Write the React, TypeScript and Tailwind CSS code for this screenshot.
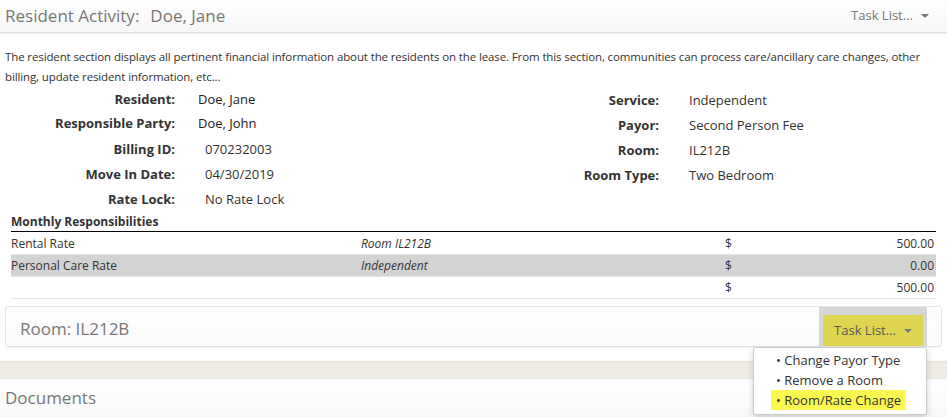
import React from 'react';

const font = { fontFamily: '"Open Sans", "Noto Sans", sans-serif' };

const Caret = () => (
  <span className="ml-[8px] inline-block h-0 w-0 border-x-[4px] border-t-[4px] border-x-transparent border-t-[#777] align-middle" />
);

const leftRows = [
  { label: 'Resident:', value: 'Doe, Jane', shift: false, h: 'h-[23px]' },
  { label: 'Responsible Party:', value: 'Doe, John', shift: false, h: 'h-[26px]' },
  { label: 'Billing ID:', value: '070232003', shift: true, h: 'h-[25px]' },
  { label: 'Move In Date:', value: '04/30/2019', shift: true, h: 'h-[25px]' },
  { label: 'Rate Lock:', value: 'No Rate Lock', shift: true, h: 'h-[25px]' },
];

const rightRows = [
  { label: 'Service:', value: 'Independent' },
  { label: 'Payor:', value: 'Second Person Fee' },
  { label: 'Room:', value: 'IL212B' },
  { label: 'Room Type:', value: 'Two Bedroom' },
];

const charges = [
  { name: 'Rental Rate', type: 'Room IL212B', amount: '500.00', shaded: false, h: 'h-[23px]' },
  { name: 'Personal Care Rate', type: 'Independent', amount: '0.00', shaded: true, h: 'h-[22px]' },
  { name: '', type: '', amount: '500.00', shaded: false, h: 'h-[22px]' },
];

export default function App() {
  return (
    <div style={font} className="relative h-[417px] w-[947px] overflow-hidden bg-white text-[#333]">
      {/* header */}
      <div className="flex h-[33px] items-center justify-between border-b border-[#ddd] bg-gradient-to-b from-white to-[#f7f7f7] pl-[5px] pr-[18px] shadow-[0_1px_2px_rgba(0,0,0,0.08)]">
        <div className="flex items-center text-[17px] text-[#777]">
          <span>Resident Activity:</span>
          <span className="ml-[11px]">Doe, Jane</span>
        </div>
        <div className="flex items-center text-[13px] text-[#777]">
          Task List...
          <Caret />
        </div>
      </div>

      {/* description */}
      <p className="mt-[14px] px-[5px] text-[11.5px] leading-[20px] tracking-[-0.12px] text-[#333]">
        The resident section displays all pertinent financial information about the residents on the lease. From this section, communities can process care/ancillary care changes, other billing, update resident information, etc...
      </p>

      {/* details */}
      <div className="mt-[1px] flex text-[13px]">
        <div className="w-[484px]">
          {leftRows.map((r) => (
            <div key={r.label} className={`flex items-center ${r.h}`}>
              <div className="w-[175px] text-right font-bold text-[#333]">{r.label}</div>
              <div className={r.shift ? 'pl-[30px]' : 'pl-[23px] text-[#222]'}>{r.value}</div>
            </div>
          ))}
        </div>
        <div className="flex-1">
          {rightRows.map((r) => (
            <div key={r.label} className="flex h-[25px] items-center">
              <div className="w-[175px] text-right font-bold text-[#333]">{r.label}</div>
              <div className="pl-[30px]">{r.value}</div>
            </div>
          ))}
        </div>
      </div>

      {/* monthly responsibilities */}
      <div className="mx-[11px] mt-[1px]">
        <div className="h-[18px] text-[12px] font-bold leading-[18px]">Monthly Responsibilities</div>
        <div className="border-t border-black">
          {charges.map((c, i) => (
            <div
              key={i}
              className={`flex ${c.h} items-center border-b border-[#e4e4e4] pt-[1px] text-[12px] ${c.shaded ? 'bg-[#d3d3d3]' : ''}`}
            >
              <div className="w-[350px]">{c.name}</div>
              <div className="w-[364px] italic">{c.type}</div>
              <div className="w-[40px]">$</div>
              <div className="flex-1 pr-[2px] text-right">{c.amount}</div>
            </div>
          ))}
        </div>
      </div>

      {/* room panel */}
      <div className="mx-[5px] mt-[7px] flex h-[41px] items-end justify-between rounded-[3px] border border-[#e3e3e3] bg-gradient-to-b from-white to-[#fafafa] pl-[14px] pr-[14px] shadow-[0_1px_1px_rgba(0,0,0,0.04)]">
        <div className="pb-[5px] text-[17px] text-[#777]">Room: IL212B</div>
        <div className="h-[39px] bg-[#d6d6d6] px-[4px] pt-[8px]">
          <div className="flex h-full items-center bg-[#ded650] px-[11px] text-[13px] text-[#555]">
            Task List...
            <Caret />
          </div>
        </div>
      </div>

      {/* separator band */}
      <div className="mt-[14px] h-[17px] border-t border-[#e6e3dd] bg-[#efece6]" />

      {/* documents panel */}
      <div className="h-[40px] border-t border-[#e6e6e6] bg-gradient-to-b from-white to-[#f8f8f8] pl-[5px] pt-[6px] text-[17px] text-[#777]">
        Documents
      </div>

      {/* dropdown */}
      <div className="absolute left-[753px] top-[347px] w-[174px] rounded-[3px] border border-[#ccc] bg-white pb-[3px] pt-[2px] pl-[22px] text-[13px] text-[#333] shadow-[0_3px_6px_rgba(0,0,0,0.18)]">
        <div className="h-[20px] leading-[20px]">• Change Payor Type</div>
        <div className="h-[20px] leading-[20px]">• Remove a Room</div>
        <div className="-ml-[5px] inline-block h-[20px] bg-[#fbf950] px-[5px] leading-[20px]">• Room/Rate Change</div>
      </div>
    </div>
  );
}
